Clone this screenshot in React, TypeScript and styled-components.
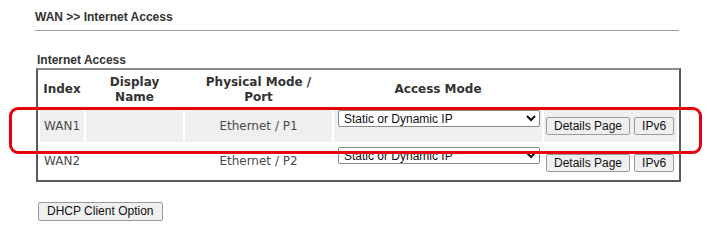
import styled, { createGlobalStyle } from "styled-components";

const GlobalStyle = createGlobalStyle`
  html, body {
    margin: 0;
    padding: 0;
    background: #fff;
  }
`;

const Page = styled.div`
  position: relative;
  width: 721px;
  height: 241px;
  padding: 10px 0 0 35px;
  box-sizing: border-box;
  font-family: "Liberation Sans", Arial, sans-serif;
`;

const Title = styled.h1`
  width: 644px;
  margin: 0;
  padding-bottom: 6px;
  border-bottom: 1px solid #a0a0a0;
  font-size: 12px;
  line-height: 14px;
  font-weight: bold;
  color: #333;
`;

const SectionTitle = styled.h2`
  margin: 22px 0 1px 2px;
  font-size: 12px;
  line-height: 14px;
  font-weight: bold;
  color: #333;
`;

const Table = styled.table`
  width: 645px;
  margin-left: 1px;
  table-layout: fixed;
  border-collapse: separate;
  border-spacing: 2px;
  border-top: 2px solid #8a8a8a;
  border-left: 2px solid #5a5a5a;
  border-right: 2px solid #5a5a5a;
  border-bottom: 2px solid #5a5a5a;
  font-family: "DejaVu Sans", Verdana, sans-serif;
  font-size: 12px;
`;

const Th = styled.th<{ $w?: number }>`
  box-sizing: border-box;
  width: ${(p) => (p.$w ? `${p.$w}px` : "auto")};
  height: 35px;
  padding: 0 2px;
  font-weight: bold;
  line-height: 15px;
  color: #333;
  text-align: center;
  vertical-align: middle;
`;

const Row = styled.tr<{ $shade?: boolean }>`
  td {
    background: ${(p) => (p.$shade ? "#efefef" : "#fff")};
  }
`;

const Td = styled.td<{ $h: number; $left?: boolean }>`
  height: ${(p) => p.$h}px;
  padding: 0 4px;
  color: #4a4a4a;
  text-align: ${(p) => (p.$left ? "left" : "center")};
  vertical-align: middle;
  white-space: nowrap;
`;

const ControlCell = styled.td<{ $top: number; $pad: number }>`
  padding: ${(p) => p.$top}px 0 0 ${(p) => p.$pad}px;
  vertical-align: top;
  white-space: nowrap;
`;

const Buttons = styled.div`
  display: flex;
  gap: 4px;
`;

const Select = styled.select`
  width: 202px;
  height: 17px;
  margin: 0;
  padding: 0 1px;
  border: 1px solid #8a8a8a;
  border-radius: 2px;
  background: #fff;
  color: #111;
  font-family: "Liberation Sans", Arial, sans-serif;
  font-size: 12px;
`;

const Button = styled.button`
  height: 18px;
  padding: 0 7px;
  border: 1px solid #9a9a9a;
  border-radius: 2px;
  background: #efefef;
  color: #111;
  font-family: "Liberation Sans", Arial, sans-serif;
  font-size: 12px;
  line-height: 16px;
  white-space: nowrap;
`;

const Footer = styled.div`
  margin: 19px 0 0 3px;
`;

const FooterButton = styled(Button)`
  height: 19px;
  padding: 0 8px;
`;

const Highlight = styled.div`
  position: absolute;
  left: 9px;
  top: 107px;
  width: 693px;
  height: 47px;
  box-sizing: border-box;
  border: 3px solid #e8000d;
  border-radius: 9px;
  pointer-events: none;
`;

const rows = [
  { index: "WAN1", port: "Ethernet / P1", shade: true, h: 33, top: 1 },
  { index: "WAN2", port: "Ethernet / P2", shade: false, h: 34, top: 3 },
];

export default function App() {
  return (
    <>
      <GlobalStyle />
      <Page>
        <Title>WAN &gt;&gt; Internet Access</Title>
        <SectionTitle>Internet Access</SectionTitle>
        <Table>
          <thead>
            <tr>
              <Th $w={44}>Index</Th>
              <Th $w={97}>
                Display
                <br />
                Name
              </Th>
              <Th $w={147}>
                Physical Mode /
                <br />
                Port
              </Th>
              <Th $w={208}>Access Mode</Th>
              <Th></Th>
            </tr>
          </thead>
          <tbody>
            {rows.map((r) => (
              <Row key={r.index} $shade={r.shade}>
                <Td $h={r.h} $left>
                  {r.index}
                </Td>
                <Td $h={r.h}></Td>
                <Td $h={r.h}>{r.port}</Td>
                <ControlCell $top={r.top} $pad={4}>
                  <Select defaultValue="static">
                    <option value="static">Static or Dynamic IP</option>
                  </Select>
                </ControlCell>
                <ControlCell $top={r.top + 7} $pad={2}>
                  <Buttons>
                    <Button>Details Page</Button>
                    <Button>IPv6</Button>
                  </Buttons>
                </ControlCell>
              </Row>
            ))}
          </tbody>
        </Table>
        <Footer>
          <FooterButton>DHCP Client Option</FooterButton>
        </Footer>
        <Highlight />
      </Page>
    </>
  );
}
